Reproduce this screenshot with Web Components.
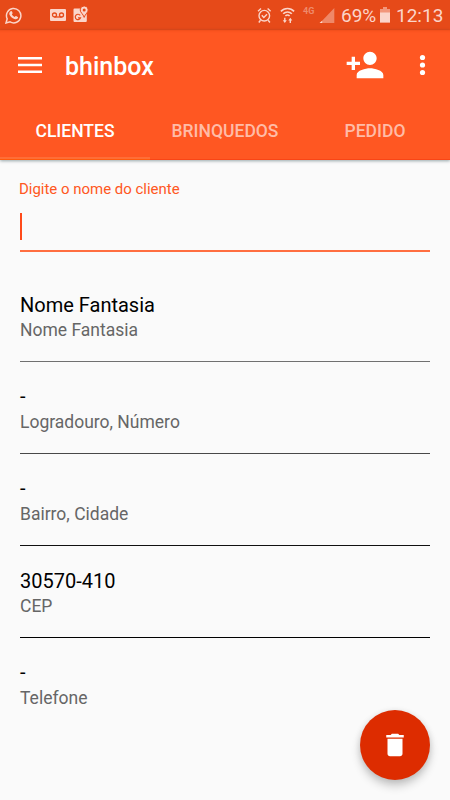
<!DOCTYPE html>
<html lang="pt-BR">
<head>
<meta charset="utf-8">
<title>bhinbox</title>
<style>
  body {
    margin: 0;
    background: #fafafa;
    font-family: Roboto, "Noto Sans", sans-serif;
  }
</style>
</head>
<body>
<client-screen>
  <status-bar slot="top" battery="69%" time="12:13"></status-bar>
  <app-bar slot="top" heading="bhinbox">
    <tab-item active>CLIENTES</tab-item>
    <tab-item>BRINQUEDOS</tab-item>
    <tab-item>PEDIDO</tab-item>
  </app-bar>
  <text-field label="Digite o nome do cliente"></text-field>
  <info-row label="Nome Fantasia" style="--line: #707070">Nome Fantasia</info-row>
  <info-row label="Logradouro, Número" style="--line: #484848" empty>-</info-row>
  <info-row label="Bairro, Cidade" style="--line: #101010" empty>-</info-row>
  <info-row label="CEP" style="--line: #000">30570-410</info-row>
  <info-row label="Telefone" empty last>-</info-row>
  <delete-fab slot="fab"></delete-fab>
</client-screen>

<script>
function define(name, html, setup) {
  const template = document.createElement('template');
  template.innerHTML = html;
  customElements.define(name, class extends HTMLElement {
    constructor() {
      super();
      this.attachShadow({ mode: 'open' });
    }

    connectedCallback() {
      if (this.shadowRoot.childNodes.length) return;
      this.shadowRoot.appendChild(template.content.cloneNode(true));
      if (setup) setup(this, this.shadowRoot);
    }
  });
}

define('client-screen', `
  <style>
    :host {
      display: flex;
      flex-direction: column;
      position: relative;
      height: 800px;
      overflow: hidden;
      background: #fafafa;
    }
    main {
      display: flex;
      flex-direction: column;
      padding: 0 20px;
    }
    /* floats over the list */
    .fab {
      position: absolute;
      right: 20px;
      bottom: 20px;
    }
  </style>
  <slot name="top"></slot>
  <main><slot></slot></main>
  <div class="fab"><slot name="fab"></slot></div>`);

define('status-bar', `
  <style>
    :host {
      display: flex;
      align-items: center;
      justify-content: space-between;
      box-sizing: border-box;
      height: 30px;
      padding: 0 8px 0 5px;
      background: #e64a19;
      color: #fbd5ca;
    }
    .group { display: flex; align-items: center; height: 30px; }
    svg { display: block; flex: none; fill: currentColor; }
    .voice { margin-left: 28px; }
    .maps { margin-left: 7px; margin-bottom: 2px; }
    .net {
      align-self: flex-start;
      width: 13px;
      margin: 6px 3px 0 8px;
      font-size: 9px;
      line-height: 11px;
      font-weight: 700;
      color: #ee8b6c;
    }
    .text { font-size: 19px; line-height: 30px; padding-top: 1px; }
    #battery { width: 35px; margin: 0 4px 0 6px; }
    #time { width: 46px; margin-left: 6px; }
  </style>
  <div class="group">
    <svg width="17" height="17" viewBox="0 0 17 17">
      <path d="M1 16l1.200-4.200A7.200 7.200 0 1 1 5.100 14.900z" fill="none" stroke="currentColor" stroke-width="1.500"/>
      <path d="M5.600 4.300c.6-.5 1.100-.3 1.400.3l.6 1.500c.1.500-.4.900-.7 1.300.7 1.200 1.600 2 2.900 2.500.4-.4.800-1.100 1.300-.9l1.700.9c.5.300.2 1.200-.2 1.600-.9.900-2.100 1-3.200.5-2.400-.8-4-2.400-5-4.500-.4-1.100 0-2.500 1.200-3.200z"/>
    </svg>
    <svg class="voice" width="16" height="12" viewBox="0 0 16 12">
      <rect width="16" height="12" rx="1"/>
      <g fill="none" stroke="#e64a19" stroke-width="1.300">
        <circle cx="4.500" cy="6" r="2"/><circle cx="11.500" cy="6" r="2"/><path d="M4.500 8h7"/>
      </g>
    </svg>
    <svg class="maps" width="16" height="18" viewBox="0 0 16 18">
      <path d="M1.500 3.500h8l4.300 6V16a1 1 0 0 1-1 1H1.500a1 1 0 0 1-1-1V4.500a1 1 0 0 1 1-1z"/>
      <path d="M7.200 10.400a2.700 2.700 0 1 0 .3 2.500H5" fill="none" stroke="#e64a19" stroke-width="1.200"/>
      <path d="M11.200.9a4 4 0 0 1 4 4c0 2.700-3 4-4 7.500-1-3.500-4-4.800-4-7.500a4 4 0 0 1 4-4z" stroke="#e64a19"/>
      <circle cx="11.200" cy="4.900" r="1.500" fill="#e64a19"/>
    </svg>
  </div>
  <div class="group">
    <svg width="15" height="17" viewBox="0 0 15 17">
      <g fill="none" stroke="currentColor" stroke-width="1.400">
        <circle cx="7.300" cy="8.700" r="5.300"/>
        <path d="M4.800 8.300l2 2.200 3.200-3.200M1 4.300l3-2.700M13.600 4.300l-3-2.700M3.500 13.300l-1.700 2.200M11.200 13.300l1.700 2.200"/>
      </g>
    </svg>
    <svg width="15" height="17" viewBox="0 0 15 17" style="margin-left: 8px">
      <g fill="none" stroke="currentColor" stroke-width="1.600">
        <path d="M.9 4.400a9 9 0 0 1 13.200 0M3.200 6.800a5.900 5.900 0 0 1 8.600 0M5.400 9a3 3 0 0 1 4.200 0"/>
      </g>
      <path d="M2.800 13.200h1.300v-2.500h1.400v2.500h1.300l-2 2.800zM8.300 13.500l2-2.800 2 2.800H11V16H9.600v-2.500z"/>
    </svg>
    <span class="net">4G</span>
    <svg width="16" height="17" viewBox="0 0 16 17">
      <path d="M15.300 1v15H1z" opacity=".45"/><path d="M3.200 13.700V16H.5z"/>
    </svg>
    <span class="text" id="battery"></span>
    <svg width="10" height="16" viewBox="0 0 10 16">
      <path d="M3 0h4v2h3v13.500H0V2h3z" opacity=".55"/><path d="M0 5.500h10v10H0z"/>
    </svg>
    <span class="text" id="time"></span>
  </div>`, (host, root) => {
  root.getElementById('battery').textContent = host.getAttribute('battery');
  root.getElementById('time').textContent = host.getAttribute('time');
});

define('app-bar', `
  <style>
    :host {
      display: block;
      box-sizing: border-box;
      height: 130px;
      background: #ff5722;
      border-bottom: 1px solid #f94516;
      color: #fff;
      box-shadow: 0 1px 3px rgba(0, 40, 50, .4), inset 0 3px 2px -2px rgba(200, 50, 10, .25);
    }
    .bar {
      display: flex;
      align-items: center;
      height: 70px;
      padding: 0 20px 0 18px;
    }
    svg { display: block; fill: currentColor; flex: none; }
    h1 {
      flex: 1;
      margin: 0 0 0 23px;
      font-size: 25px;
      line-height: 30px;
      font-weight: 500;
      padding-top: 3px;
    }
    .more { margin-left: 33px; }
    .tabs {
      display: grid;
      grid-template-columns: repeat(3, 1fr);
      height: 59px;
    }
  </style>
  <div class="bar">
    <svg width="24" height="16" viewBox="0 0 24 16"><path d="M0 0h24v2.600H0zM0 6.700h24v2.600H0zM0 13.400h24V16H0z"/></svg>
    <h1></h1>
    <svg width="40" height="40" viewBox="0 0 24 24">
      <path d="M15 12c2.210 0 4-1.790 4-4s-1.790-4-4-4-4 1.790-4 4 1.790 4 4 4zm-9-2V7H4v3H1v2h3v3h2v-3h3v-2H6zm9 4c-2.670 0-8 1.340-8 4v2h16v-2c0-2.660-5.330-4-8-4z"/>
    </svg>
    <svg class="more" width="12" height="22" viewBox="0 0 12 22">
      <circle cx="4.500" cy="3.500" r="2.600"/><circle cx="4.500" cy="11" r="2.600"/><circle cx="4.500" cy="18.500" r="2.600"/>
    </svg>
  </div>
  <div class="tabs"><slot></slot></div>`, (host, root) => {
  root.querySelector('h1').textContent = host.getAttribute('heading');
});

define('tab-item', `
  <style>
    :host {
      display: flex;
      align-items: center;
      justify-content: center;
      box-sizing: border-box;
      padding-top: 5px;
      border-bottom: 2px solid transparent;
      font-size: 17.5px;
      line-height: 22px;
      font-weight: 500;
      color: #ffbca7;
    }
    :host([active]) {
      color: #fff;
      border-bottom-color: #ff6e36;
      box-shadow: 0 1px #ff5a0c;
    }
  </style>
  <slot></slot>`);

define('text-field', `
  <style>
    :host {
      display: block;
      height: 92px;
      box-sizing: border-box;
      padding-top: 19px;
      border-bottom: 2px solid #ff6e40;
    }
    label {
      display: block;
      margin-left: -1px;
      font-size: 15px;
      line-height: 20px;
      letter-spacing: -.02px;
      color: #ff5722;
    }
    .caret {
      width: 1.5px;
      height: 27px;
      margin-top: 14px;
      background: #ff4a1a;
    }
  </style>
  <label></label>
  <div class="caret"></div>`, (host, root) => {
  root.querySelector('label').textContent = host.getAttribute('label');
});

define('info-row', `
  <style>
    :host {
      display: flex;
      flex-direction: column;
      box-sizing: border-box;
      height: 92px;
      padding-top: 22px;
      border-bottom: 1px solid var(--line, #000);
    }
    :host(:first-of-type) {
      height: 110px;
      padding-top: 40px;
    }
    :host([empty]) { padding-top: 21px; }
    :host([empty]) .value { margin-bottom: 1px; }
    :host([last]) { border-bottom: none; }
    .value {
      font-size: 20px;
      line-height: 26px;
      color: #000;
    }
    .label {
      font-size: 17.5px;
      line-height: 24px;
      color: #666;
    }
  </style>
  <div class="value"><slot></slot></div>
  <div class="label"></div>`, (host, root) => {
  root.querySelector('.label').textContent = host.getAttribute('label');
});

define('delete-fab', `
  <style>
    :host {
      display: flex;
      align-items: center;
      justify-content: center;
      width: 70px;
      height: 70px;
      border-radius: 50%;
      background: #dd2c00;
      box-shadow: 0 6px 10px rgba(0, 0, 0, .2), 0 1px 6px rgba(0, 0, 0, .1);
    }
    svg { display: block; fill: #fff; }
  </style>
  <svg width="30" height="30" viewBox="0 0 24 24">
    <path d="M6 19c0 1.100.9 2 2 2h8c1.100 0 2-.9 2-2V7H6v12zM19 4h-3.500l-1-1h-5l-1 1H5v2h14V4z"/>
  </svg>`);
</script>
</body>
</html>
